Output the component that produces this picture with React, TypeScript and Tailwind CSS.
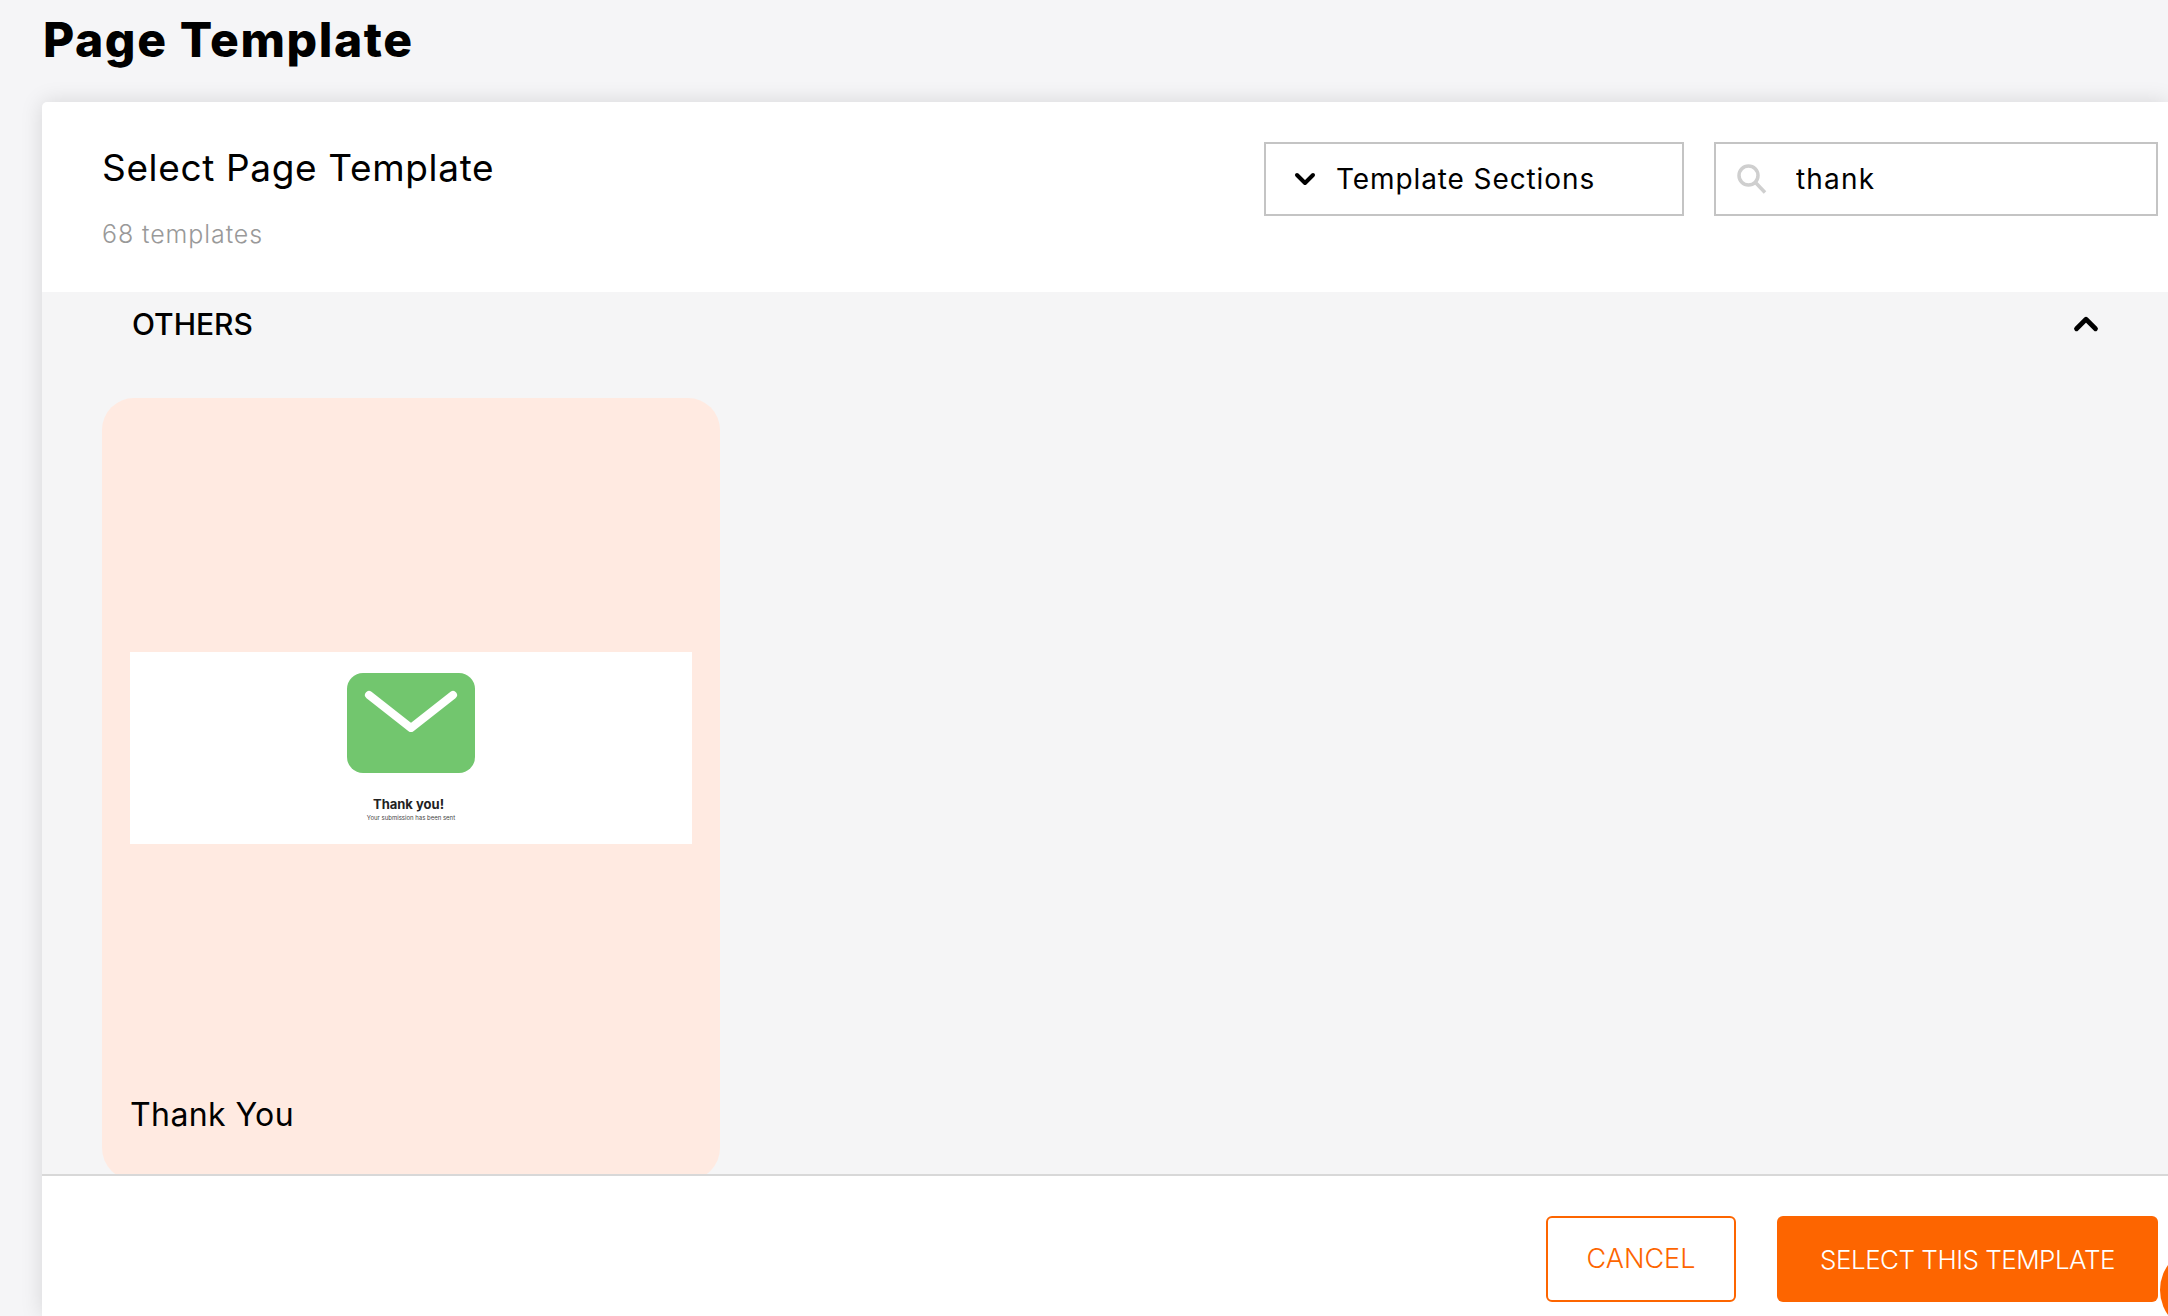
import { ChevronDown, ChevronUp } from 'lucide-react';

const font = "font-['Inter',sans-serif]";

const TemplateCard = () => {
  return (
    <div className="flex h-[782px] w-[618px] shrink-0 flex-col rounded-[32px] bg-[#ffeae1] px-[28px] pt-[254px]">
      {/* Thumbnail of the template */}
      <div className="flex h-[192px] flex-col items-center bg-white pt-[21px]">
        <div className="flex h-[100px] w-[128px] justify-center rounded-[16px] bg-[#72c66e]">
          <svg width="128" height="100" viewBox="0 0 128 100" fill="none">
            <path d="M22 22 L64 55 L106 22" stroke="white" strokeWidth="8" strokeLinecap="round" strokeLinejoin="round" />
          </svg>
        </div>
        <p className="mr-[5px] mt-[22px] text-[13px] leading-[18px] font-bold text-[#222]">Thank you!</p>
        <p className="text-[6px] leading-[9px] text-[#444]">Your submission has been sent</p>
      </div>
      <p className="mt-[251px] text-[32px] leading-[40px] tracking-[0.4px] text-black">Thank You</p>
    </div>
  );
};

const App = () => {
  return (
    <div className={`relative flex h-[1316px] w-full flex-col overflow-hidden bg-[#f5f5f7] ${font}`}>
      {/* Page title */}
      <div className="flex h-[102px] shrink-0 items-start pl-[43px] pt-[12px]">
        <h1 className="text-[48px] leading-[56px] font-extrabold tracking-[1.6px] text-black">Page Template</h1>
      </div>

      <div className="ml-[42px] flex min-h-0 flex-1 flex-col rounded-tl-[5px] bg-white shadow-[0_0_22px_rgba(0,0,0,0.13)]">
        {/* Header with filters */}
        <div className="flex h-[190px] shrink-0 justify-between pl-[60px] pr-[10px]">
          <div className="pt-[41px]">
            <h2 className="text-[37px] leading-[50px] tracking-[0.65px] text-black">Select Page Template</h2>
            <p className="mt-[25px] text-[25px] leading-[32px] font-light tracking-[0.9px] text-[#999]">68 templates</p>
          </div>
          <div className="flex items-start gap-[30px] pt-[40px]">
            <div className="flex h-[74px] w-[420px] items-center border-2 border-[#c4c4c4] pl-[23px]">
              <ChevronDown className="size-[32px] text-black" strokeWidth={3} />
              <span className="ml-[15px] text-[28px] tracking-[0.9px] text-black">Template Sections</span>
            </div>
            <div className="flex h-[74px] w-[444px] items-center border-2 border-[#c4c4c4] pl-[21px]">
              <svg width="30" height="30" viewBox="0 0 30 30" fill="none" className="shrink-0 text-[#cfcfcf]">
                <circle cx="11.5" cy="11.5" r="9.5" stroke="currentColor" strokeWidth="3.5" />
                <path d="M18.5 18.5 L28 28.5" stroke="currentColor" strokeWidth="3.5" />
              </svg>
              <input
                readOnly
                value="thank"
                className="ml-[29px] w-[300px] text-[28px] tracking-[1.2px] text-black outline-none"
              />
            </div>
          </div>
        </div>

        <div className="min-h-0 flex-1 overflow-hidden bg-[#f5f5f6]">
          <div className="flex h-[106px] items-start justify-between pl-[90px] pr-[63px] pt-[12px]">
            <span className="text-[30px] leading-[40px] font-medium text-black">OTHERS</span>
            <ChevronUp className="mt-[1px] size-[38px] text-black" strokeWidth={3} />
          </div>
          <div className="pl-[60px]">
            <TemplateCard />
          </div>
        </div>

        {/* Footer actions */}
        <div className="flex h-[142px] shrink-0 justify-end gap-[41px] border-t-2 border-[#d8d8d8] pr-[10px] pt-[40px]">
          <button className="h-[86px] w-[190px] rounded-[6px] border-2 border-[#fd6500] text-[27px] font-light text-[#fd6500]">
            CANCEL
          </button>
          <button className="h-[86px] w-[381px] rounded-[6px] bg-[#fd6500] text-[26px] font-light tracking-[-0.5px] text-white">
            SELECT THIS TEMPLATE
          </button>
        </div>
      </div>

      {/* Floating help bubble, cut off by the window */}
      <div className="absolute left-[2160px] top-[1247px] size-[86px] rounded-full bg-[#fd6500]" />
    </div>
  );
};

export default App;
